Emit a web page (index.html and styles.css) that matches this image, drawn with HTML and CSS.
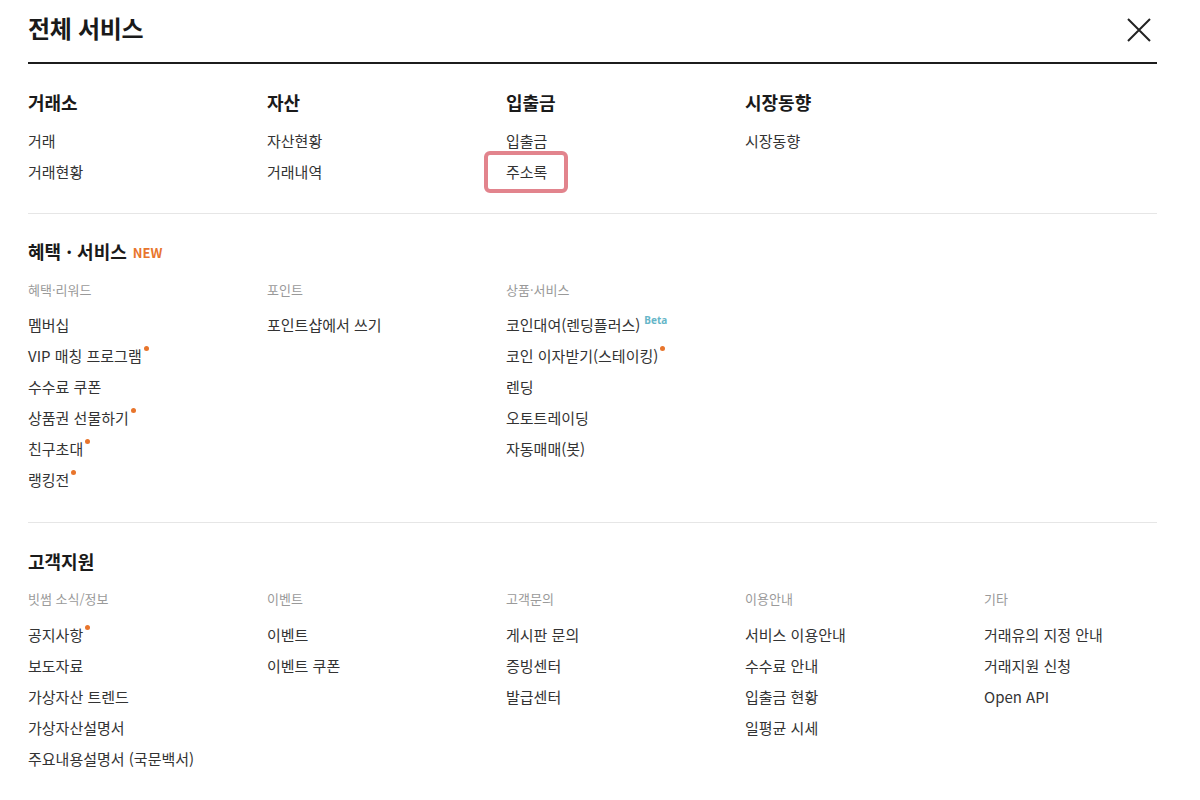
FILE: index.html
```html
<!DOCTYPE html>
<html lang="ko">
<head>
<meta charset="utf-8">
<title>전체 서비스</title>
<link rel="stylesheet" href="styles.css">
</head>
<body>
<div class="panel">
  <header class="head">
    <h1 class="title">전체 서비스</h1>
    <button class="close" aria-label="닫기">
      <svg width="24" height="24" viewBox="0 0 24 24"><path d="M1 1L23 23M23 1L1 23" stroke="#222" stroke-width="2" fill="none"/></svg>
    </button>
  </header>

  <section class="sec sec-top">
    <div class="grid">
      <div class="col">
        <h2 class="col-title">거래소</h2>
        <ul class="list"><li>거래</li><li>거래현황</li></ul>
      </div>
      <div class="col">
        <h2 class="col-title">자산</h2>
        <ul class="list"><li>자산현황</li><li>거래내역</li></ul>
      </div>
      <div class="col">
        <h2 class="col-title">입출금</h2>
        <ul class="list"><li>입출금</li><li><span class="mark">주소록</span></li></ul>
      </div>
      <div class="col">
        <h2 class="col-title">시장동향</h2>
        <ul class="list"><li>시장동향</li></ul>
      </div>
    </div>
  </section>

  <section class="sec sec-benefit">
    <h2 class="sec-title">혜택 · 서비스<span class="new">NEW</span></h2>
    <div class="grid">
      <div class="col">
        <h3 class="sub">혜택·리워드</h3>
        <ul class="list">
          <li>멤버십</li>
          <li>VIP 매칭 프로그램<span class="dot"></span></li>
          <li>수수료 쿠폰</li>
          <li>상품권 선물하기<span class="dot"></span></li>
          <li>친구초대<span class="dot"></span></li>
          <li>랭킹전<span class="dot"></span></li>
        </ul>
      </div>
      <div class="col">
        <h3 class="sub">포인트</h3>
        <ul class="list"><li>포인트샵에서 쓰기</li></ul>
      </div>
      <div class="col">
        <h3 class="sub">상품·서비스</h3>
        <ul class="list">
          <li>코인대여(렌딩플러스)<span class="beta">Beta</span></li>
          <li>코인 이자받기(스테이킹)<span class="dot"></span></li>
          <li>렌딩</li>
          <li>오토트레이딩</li>
          <li>자동매매(봇)</li>
        </ul>
      </div>
    </div>
  </section>

  <section class="sec sec-support">
    <h2 class="sec-title">고객지원</h2>
    <div class="grid">
      <div class="col">
        <h3 class="sub">빗썸 소식/정보</h3>
        <ul class="list">
          <li>공지사항<span class="dot"></span></li>
          <li>보도자료</li>
          <li>가상자산 트렌드</li>
          <li>가상자산설명서</li>
          <li>주요내용설명서 (국문백서)</li>
        </ul>
      </div>
      <div class="col">
        <h3 class="sub">이벤트</h3>
        <ul class="list"><li>이벤트</li><li>이벤트 쿠폰</li></ul>
      </div>
      <div class="col">
        <h3 class="sub">고객문의</h3>
        <ul class="list"><li>게시판 문의</li><li>증빙센터</li><li>발급센터</li></ul>
      </div>
      <div class="col">
        <h3 class="sub">이용안내</h3>
        <ul class="list"><li>서비스 이용안내</li><li>수수료 안내</li><li>입출금 현황</li><li>일평균 시세</li></ul>
      </div>
      <div class="col">
        <h3 class="sub">기타</h3>
        <ul class="list"><li>거래유의 지정 안내</li><li>거래지원 신청</li><li>Open API</li></ul>
      </div>
    </div>
  </section>
</div>
</body>
</html>
```

FILE: styles.css
```css
* { box-sizing: border-box; }

html, body {
  margin: 0;
  padding: 0;
  background: #fff;
}

body {
  font-family: "Noto Sans CJK KR", "Noto Sans", sans-serif;
  color: #2b2b2b;
  overflow: hidden;
}

.panel {
  width: 1200px;
  padding: 0 43px 0 28px;
}

.head {
  display: flex;
  justify-content: space-between;
  align-items: center;
  padding: 13px 0 19px;
  border-bottom: 2px solid #1c1c1c;
}

.title {
  margin: 0;
  font-size: 24px;
  line-height: 30px;
  height: 30px;
  font-weight: 700;
  color: #1a1a1a;
  letter-spacing: -0.3px;
}

.close {
  width: 24px;
  height: 24px;
  padding: 0;
  margin: 4px 6px 0 0;
  border: 0;
  background: none;
  display: flex;
}

.sec {
  border-bottom: 1px solid #e6e6e6;
}

.sec-top {
  padding: 26px 0 26px;
}

.sec-benefit {
  padding: 25px 0 27px;
}

.sec-support {
  padding: 26px 0 0;
  border-bottom: 0;
}

.grid {
  display: grid;
  grid-template-columns: repeat(4, 239px) 1fr;
}

.col-title,
.sec-title {
  margin: 0;
  font-size: 18px;
  line-height: 24px;
  height: 24px;
  font-weight: 700;
  color: #1a1a1a;
}

.col-title {
  margin-bottom: 11px;
}

.sec-benefit .sec-title {
  margin-bottom: 18px;
}

.sec-support .sec-title {
  margin-bottom: 17px;
}

.new {
  font-size: 13px;
  line-height: 1;
  font-weight: 700;
  color: #e8752c;
  margin-left: 6px;
  vertical-align: 1px;
}

.sub {
  margin: 0 0 10px;
  font-size: 13px;
  line-height: 18px;
  height: 18px;
  font-weight: 400;
  color: #9a9a9a;
}

.sec-support .sub {
  margin-bottom: 11px;
}

.list {
  list-style: none;
  margin: 0;
  padding: 0;
}

.list li {
  font-size: 15px;
  line-height: 31px;
  height: 31px;
  color: #333;
  white-space: nowrap;
}

.dot {
  display: inline-block;
  width: 5px;
  height: 5px;
  border-radius: 50%;
  background: #e8752c;
  vertical-align: top;
  margin: 6px 0 0 2px;
}

.beta {
  display: inline-block;
  font-size: 10px;
  font-weight: 700;
  color: #66b6c8;
  line-height: 1;
  vertical-align: top;
  margin: 6px 0 0 4px;
  font-family: "Noto Sans", sans-serif;
}

.mark {
  position: relative;
  display: inline-block;
}

.mark::after {
  content: "";
  position: absolute;
  left: -22px;
  right: -21px;
  top: -5px;
  bottom: -6px;
  border: 4px solid #e2848d;
  border-radius: 6px;
}
```
